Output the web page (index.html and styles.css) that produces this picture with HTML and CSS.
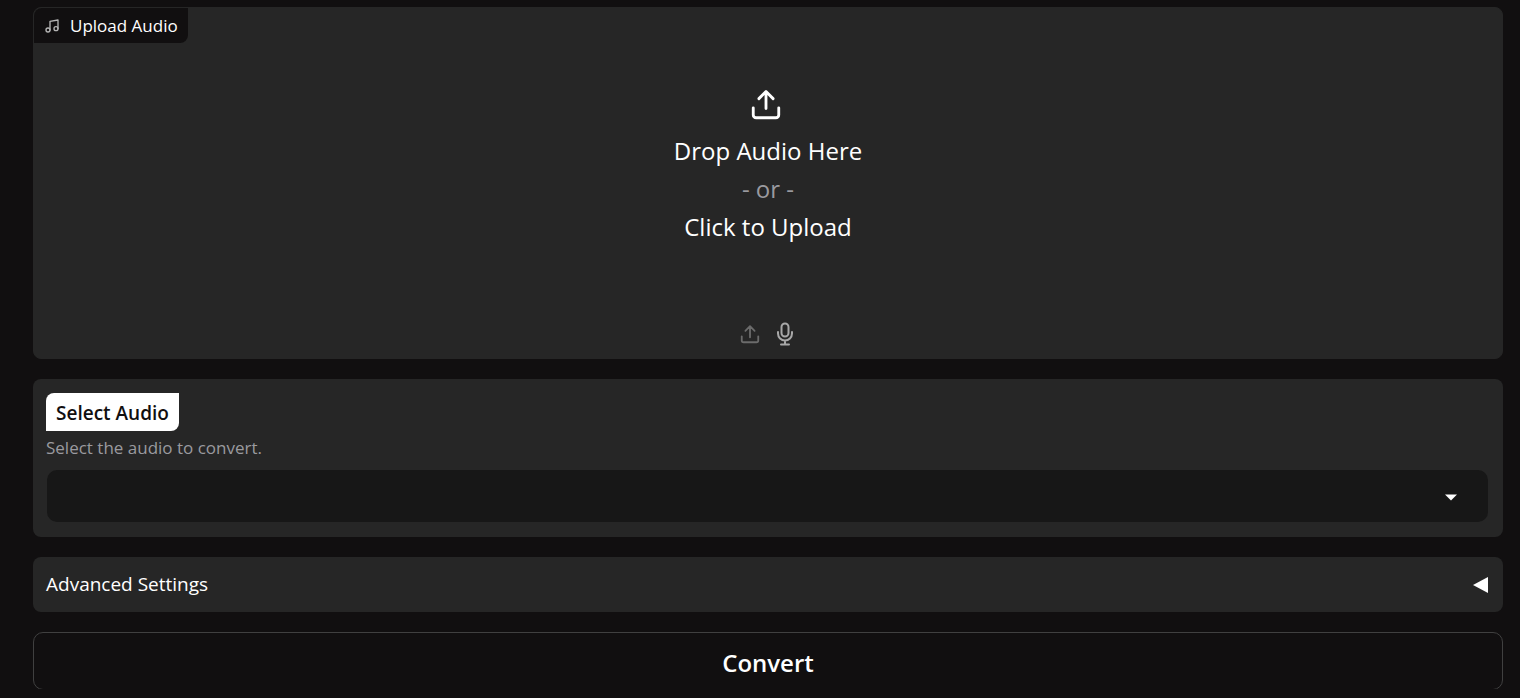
FILE: index.html
```html
<!DOCTYPE html>
<html lang="en">
<head>
<meta charset="utf-8">
<title>Audio Converter</title>
<link rel="stylesheet" href="styles.css">
</head>
<body>
<main class="page">
  <section class="panel upload">
    <h2 class="upload-label">
      <svg class="note-icon" viewBox="0 0 24 24" aria-hidden="true"><path d="M9 18V5l12-2v13"/><circle cx="6" cy="18" r="3"/><circle cx="18" cy="16" r="3"/></svg>
      Upload Audio
    </h2>
    <button class="dropzone" type="button">
      <svg class="drop-icon" viewBox="0 0 24 24" aria-hidden="true"><path d="M3 14v5a2 2 0 0 0 2 2h14a2 2 0 0 0 2-2v-5M12 14.5V3M7 7.500 12 2.500 17 7.500"/></svg>
      <span>Drop Audio Here</span>
      <span class="or">- or -</span>
      <span>Click to Upload</span>
    </button>
    <div class="sources">
      <button class="source source-upload" type="button" aria-label="Upload file">
        <svg viewBox="0 0 24 24" aria-hidden="true"><path d="M3 14.500v4.500a2 2 0 0 0 2 2h14a2 2 0 0 0 2-2v-4.500M12 15.500V4M7 8.500 12 3.500 17 8.500"/></svg>
      </button>
      <button class="source source-mic" type="button" aria-label="Record audio">
        <svg viewBox="0 0 24 24" aria-hidden="true"><rect x="8.500" y="1.500" width="7" height="13" rx="3.500"/><path d="M5 10v1.500a7 7 0 0 0 14 0V10M12 18.500V22M8 22.500h8"/></svg>
      </button>
    </div>
  </section>

  <section class="panel field">
    <label class="field-label" for="audio">Select Audio</label>
    <p class="hint" id="audio-hint">Select the audio to convert.</p>
    <div class="select-wrap">
      <select class="select" id="audio" aria-describedby="audio-hint"></select>
      <svg class="caret" viewBox="0 0 18 18" aria-hidden="true"><path d="M3 6.500 9 12.500 15 6.500z"/></svg>
    </div>
  </section>

  <button class="panel accordion" type="button" aria-expanded="false">
    <span>Advanced Settings</span>
    <svg class="accordion-arrow" viewBox="0 0 15 16" aria-hidden="true"><path d="M15 0v16L0 8z"/></svg>
  </button>

  <div class="actions">
    <button class="convert" type="button">Convert</button>
  </div>
</main>
</body>
</html>
```
FILE: styles.css
```css
* {
  box-sizing: border-box;
}

body {
  margin: 0;
  background: #110f10;
  color: #fff;
  font: 18px/27px "Segoe UI", "Open Sans", "Noto Sans", sans-serif;
}

button,
select {
  margin: 0;
  padding: 0;
  border: 0;
  background: none;
  color: inherit;
  font: inherit;
  cursor: pointer;
}

svg {
  display: block;
  fill: none;
  stroke: currentColor;
  stroke-width: 2;
  stroke-linecap: round;
  stroke-linejoin: round;
}

.page {
  display: flex;
  flex-direction: column;
  gap: 20px;
  padding: 7px 17px 8px 33px;
}

.panel {
  border-radius: 8px;
  background: #262626;
}

.upload {
  display: flex;
  flex-direction: column;
  border: 1px solid #262626;
  padding-bottom: 12px;
}

.upload-label {
  display: flex;
  align-items: center;
  align-self: flex-start;
  gap: 10px;
  margin: 0;
  padding: 4px 10px;
  border-radius: 8px 0;
  background: #110f10;
  font-size: 17px;
  font-weight: 400;
}

.note-icon {
  width: 16px;
  height: 16px;
  color: #b5b5b5;
}

.dropzone {
  display: flex;
  flex-direction: column;
  align-items: center;
  padding: 45px 0 76px;
  font-size: 24px;
  line-height: 38px;
}

.drop-icon {
  width: 34px;
  height: 34px;
  margin-right: 4px;
  margin-bottom: 10px;
}

.or {
  color: #9a9a9f;
}

.sources {
  display: flex;
  justify-content: center;
  align-items: center;
  gap: 12px;
}

.source svg {
  width: 24px;
  height: 24px;
}

.source-upload {
  color: #6b6b6b;
}

.source-upload svg {
  width: 22px;
  height: 22px;
}

.source-mic {
  color: #a8a8a8;
}

.field {
  display: flex;
  flex-direction: column;
  align-items: flex-start;
  padding: 14px 15px 15px 13px;
}

.field-label {
  padding: 6px 10px 4px;
  border-radius: 8px 0;
  background: #fff;
  color: #110f10;
  font-size: 19px;
  font-weight: 600;
  line-height: 28px;
}

.hint {
  margin: 3px 0 9px;
  color: #9a9a9f;
  font-size: 17px;
}

.select-wrap {
  position: relative;
  align-self: stretch;
  padding-left: 1px;
}

.select {
  display: block;
  width: 100%;
  height: 52px;
  padding: 0 56px 0 16px;
  border-radius: 10px;
  background: #171717;
  appearance: none;
}

.caret {
  position: absolute;
  top: 18px;
  right: 28px;
  width: 18px;
  height: 18px;
  fill: currentColor;
  stroke: none;
  pointer-events: none;
}

.accordion {
  display: flex;
  justify-content: space-between;
  align-items: center;
  padding: 14px 15px 14px 13px;
  font-size: 19px;
  text-align: left;
}

.accordion-arrow {
  width: 15px;
  height: 16px;
  fill: currentColor;
  stroke: none;
}

.actions {
  overflow: hidden;
}

.convert {
  display: block;
  width: 100%;
  margin-bottom: -1px;
  padding: 12px 0 9px;
  border: 1px solid #404040;
  border-radius: 10px;
  font-size: 24px;
  font-weight: 600;
  line-height: 35px;
}
```
